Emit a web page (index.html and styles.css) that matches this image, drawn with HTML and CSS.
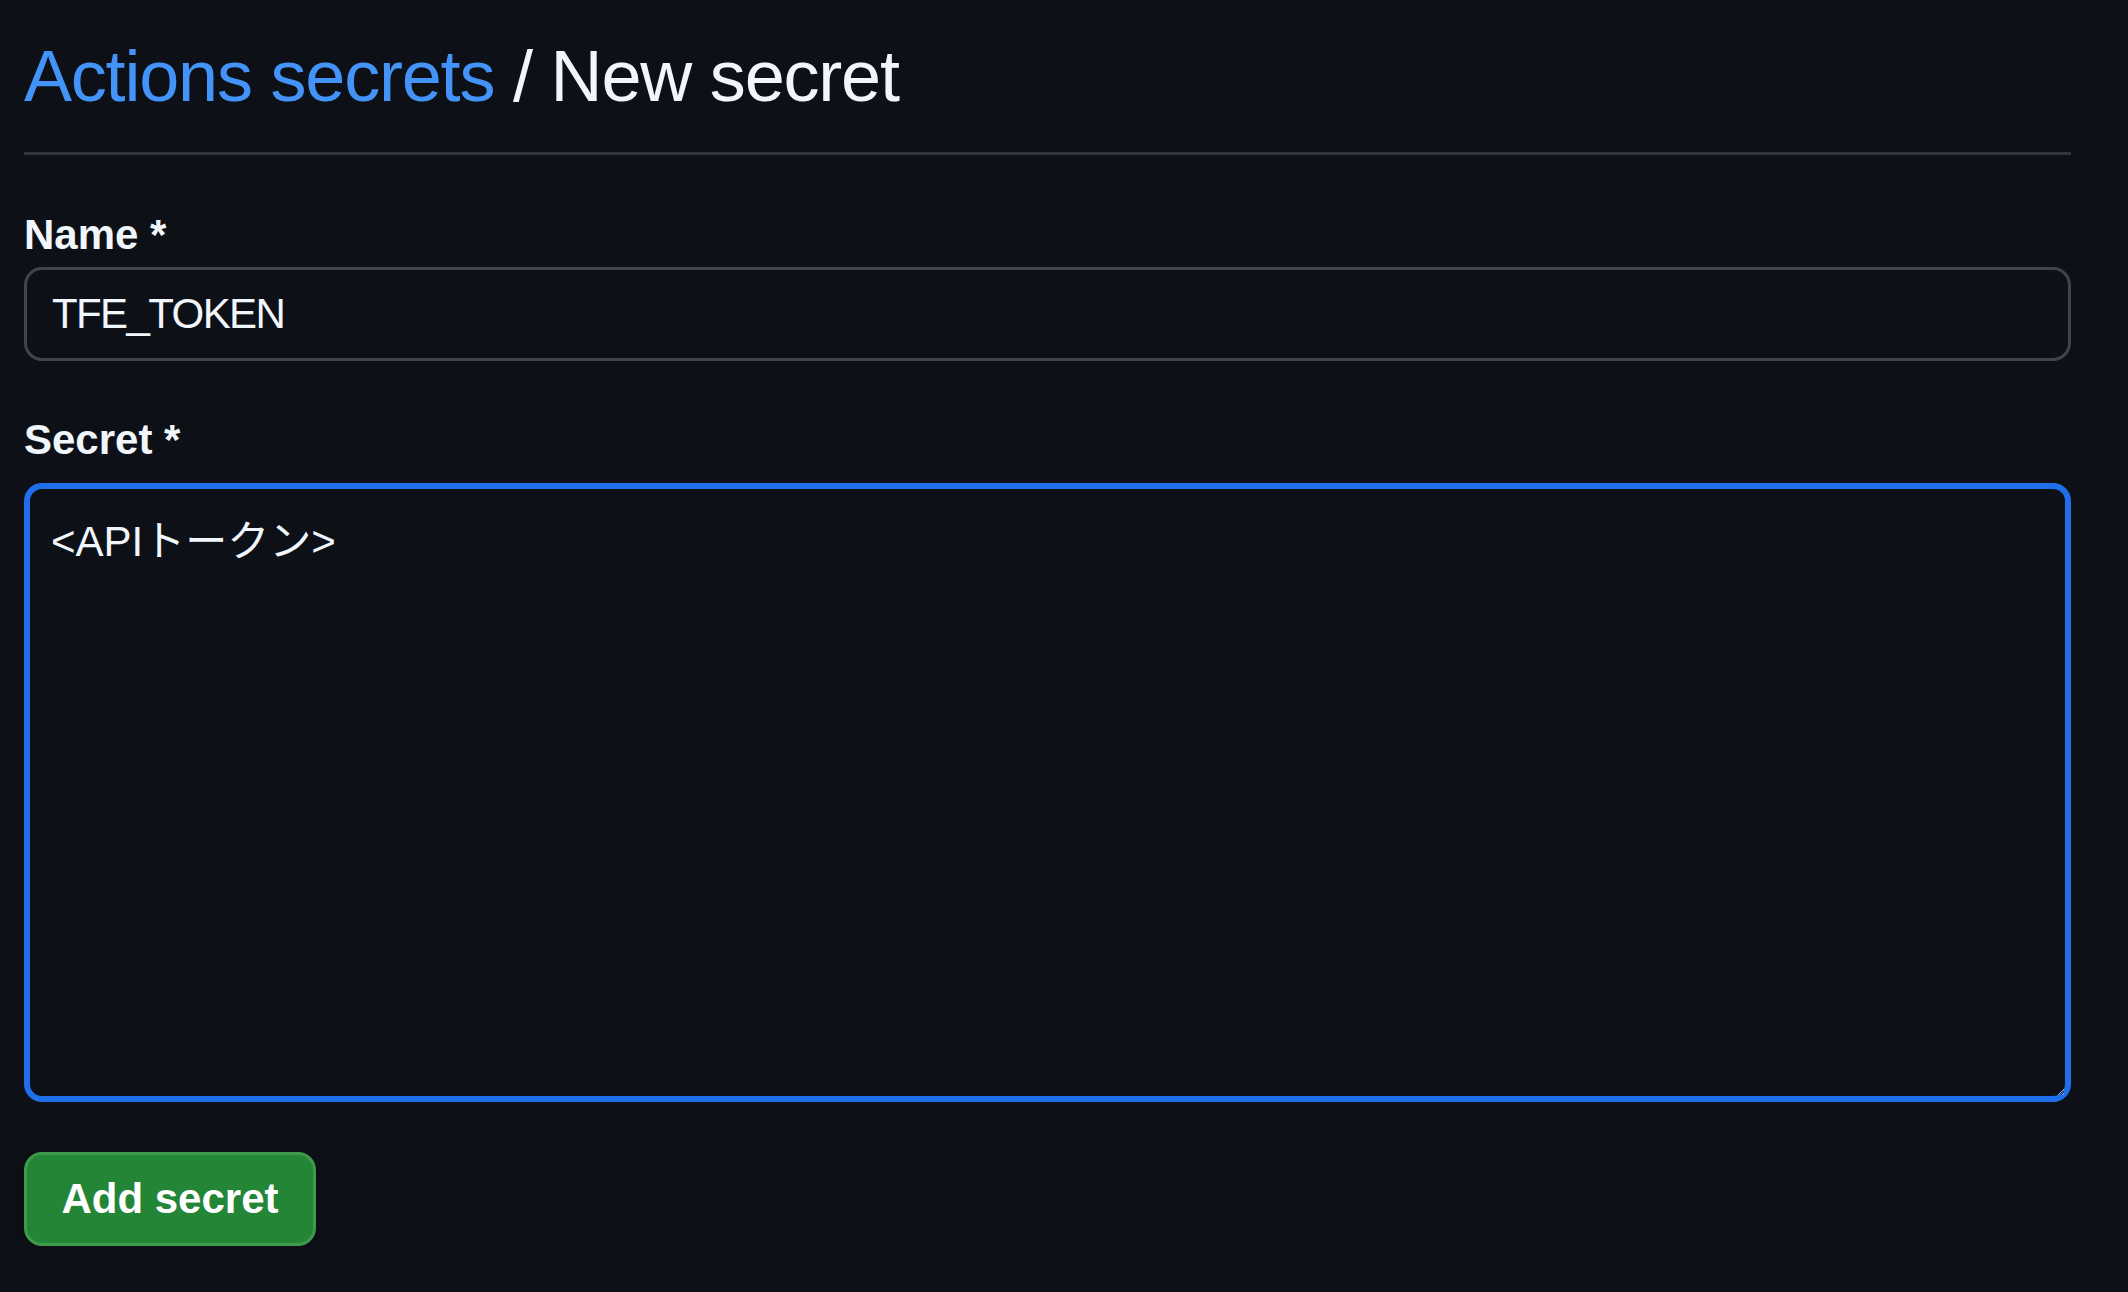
FILE: index.html
```html
<!DOCTYPE html>
<html lang="ja">
<head>
<meta charset="utf-8">
<title>New secret</title>
<link rel="stylesheet" href="styles.css">
</head>
<body>
<main class="page">
  <h1 class="page-title"><a class="crumb-link" href="#">Actions secrets</a> / New secret</h1>
  <form class="secret-form">
    <div class="form-group">
      <label class="form-label" for="name">Name *</label>
      <input class="form-input" id="name" type="text" value="TFE_TOKEN">
    </div>
    <div class="form-group form-group-secret">
      <label class="form-label label-secret" for="secret">Secret *</label>
      <textarea class="form-textarea" id="secret">&lt;APIトークン&gt;</textarea>
    </div>
    <button class="btn-primary" type="button">Add secret</button>
  </form>
</main>
</body>
</html>
```

FILE: styles.css
```css
html, body {
  margin: 0;
  padding: 0;
  background: #0d1117;
  color: #f0f6fc;
  font-family: "Liberation Sans", Arial, sans-serif;
}

.page {
  width: 2047px;
  margin-left: 24px;
  padding-top: 31px;
}

.page-title {
  margin: 0;
  font-size: 72px;
  font-weight: 400;
  line-height: 90px;
  letter-spacing: -1.2px;
  padding-bottom: 31px;
  border-bottom: 3px solid #30363d;
  color: #f0f6fc;
}

.crumb-link {
  color: #4493f8;
  text-decoration: none;
}

.secret-form {
  display: flex;
  flex-direction: column;
  align-items: flex-start;
}

.form-group {
  display: flex;
  flex-direction: column;
  width: 100%;
  margin-top: 50px;
}

.form-group-secret {
  margin-top: 49px;
}

.form-label {
  font-size: 42px;
  font-weight: 700;
  line-height: 60px;
  margin-bottom: 2px;
}

.label-secret {
  margin-bottom: 13px;
}

.form-input {
  box-sizing: border-box;
  width: 100%;
  height: 94px;
  margin: 0;
  padding: 0 25px;
  background: #0d1117;
  color: #f0f6fc;
  border: 3px solid #3d444d;
  border-radius: 18px;
  font-family: "Liberation Sans", Arial, sans-serif;
  font-size: 42px;
  letter-spacing: -1.6px;
  outline: none;
}

.form-textarea {
  box-sizing: border-box;
  width: 100%;
  height: 619px;
  margin: 0;
  padding: 23px 21px;
  background: #0d1117;
  color: #f0f6fc;
  border: 6px solid #1f6feb;
  border-radius: 18px;
  font-family: "Liberation Sans", "Noto Sans CJK JP", sans-serif;
  font-size: 42px;
  line-height: 60px;
  outline: none;
  resize: vertical;
  color-scheme: dark;
}

.btn-primary {
  box-sizing: border-box;
  margin-top: 50px;
  width: 292px;
  height: 94px;
  padding: 0;
  background: #238636;
  color: #ffffff;
  border: 3px solid #3f9a4c;
  border-radius: 18px;
  font-family: "Liberation Sans", Arial, sans-serif;
  font-size: 42px;
  font-weight: 700;
  box-shadow: 0 3px 6px rgba(0, 0, 0, 0.35);
}
```
